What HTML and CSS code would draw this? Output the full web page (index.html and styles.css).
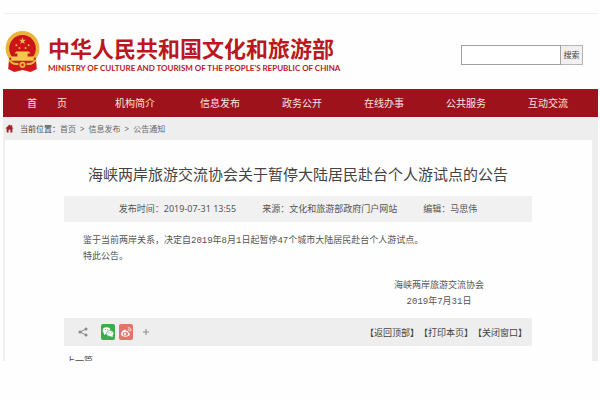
FILE: index.html
```html
<!DOCTYPE html>
<html lang="zh-CN">
<head>
    <meta charset="UTF-8">
    <title>海峡两岸旅游交流协会关于暂停大陆居民赴台个人游试点的公告</title>
    <link rel="stylesheet" href="styles.css">
</head>
<body>
<div class="page">

    <header class="header">
        <svg class="emblem" viewBox="0 0 34 41">
            <ellipse cx="17" cy="17" rx="16.5" ry="17" fill="#e9b43c"/>
            <path d="M4 26l-1 11 6 3 8-2 8 2 6-3-1-11z" fill="#cf1a1e"/>
            <path d="M4 28q3 5 9 4M30 28q-3 5-9 4" fill="none" stroke="#edb941" stroke-width="2"/>
            <circle cx="17" cy="17" r="13" fill="#cd1319"/>
            <path d="M17 6l.9 2.500h2.600l-2.100 1.600.8 2.600-2.200-1.500-2.200 1.500.8-2.600-2.100-1.600h2.600z" fill="#f2b84b"/>
            <g fill="#f2b84b">
                <circle cx="11" cy="14" r="1"/>
                <circle cx="23" cy="14" r="1"/>
                <circle cx="14" cy="16.500" r="1"/>
                <circle cx="20" cy="16.500" r="1"/>
            </g>
            <path d="M11 20h12l2 2h-3v3h6v4H6v-4h6v-3H9z" fill="#f2c84b"/>
            <circle cx="17" cy="33" r="3" fill="#edb941"/>
            <circle cx="17" cy="33" r="1.200" fill="#cf1a1e"/>
        </svg>
        <div class="brand">
            <div class="brand-cn">中华人民共和国文化和旅游部</div>
            <div class="brand-en">MINISTRY OF CULTURE AND TOURISM OF THE PEOPLE'S REPUBLIC OF CHINA</div>
        </div>
        <form class="search">
            <input type="text" class="search-input" aria-label="搜索">
            <button type="submit" class="search-btn">搜索</button>
        </form>
    </header>

    <nav class="nav">
        <a href="#" class="wide">首&emsp;&emsp;页</a>
        <a href="#" class="wide">机构简介</a>
        <a href="#">信息发布</a>
        <a href="#">政务公开</a>
        <a href="#">在线办事</a>
        <a href="#">公共服务</a>
        <a href="#">互动交流</a>
    </nav>

    <div class="crumbs">
        <svg class="home" viewBox="0 0 10 10">
            <path d="M5 .500L.500 5h1.300v4.500h2.200V6.500h2v3h2.200V5h1.300L8 3.500V1H7v1.500z" fill="#a3222b"/>
        </svg>
        <span class="crumbs-label">当前位置：</span>
        <a href="#">首页</a>
        <span class="sep">&gt;</span>
        <a href="#">信息发布</a>
        <span class="sep">&gt;</span>
        <a href="#">公告通知</a>
    </div>

    <main class="main">
        <h1>海峡两岸旅游交流协会关于暂停大陆居民赴台个人游试点的公告</h1>
        <div class="meta">
            <span>发布时间：2019-07-31 13:55</span>
            <span>来源：文化和旅游部政府门户网站</span>
            <span>编辑：马思伟</span>
        </div>

        <div class="content">
            <p>鉴于当前两岸关系，决定自2019年8月1日起暂停47个城市大陆居民赴台个人游试点。</p>
            <p>特此公告。</p>
            <div class="sign">
                <p>海峡两岸旅游交流协会</p>
                <p>2019年7月31日</p>
            </div>
        </div>

        <div class="tools">
            <svg class="share" viewBox="0 0 10 10">
                <path d="M8 2L2 5l6 3" fill="none" stroke="#8a8a8a"/>
                <circle cx="8" cy="2" r="1.500" fill="#8a8a8a"/>
                <circle cx="2" cy="5" r="1.600" fill="#8a8a8a"/>
                <circle cx="8" cy="8" r="1.500" fill="#8a8a8a"/>
            </svg>
            <a href="#" class="icon wechat" aria-label="微信">
                <svg viewBox="0 0 14 16">
                    <ellipse cx="5.500" cy="6.500" rx="3.800" ry="3.300" fill="#fff"/>
                    <path d="M3 8.500v2.500l2.500-1.500z" fill="#fff"/>
                    <ellipse cx="9" cy="9.500" rx="3.600" ry="3" fill="#fff" stroke="#3aad4c" stroke-width=".6"/>
                    <path d="M9.500 12l2.200 1.300-.2-2.300z" fill="#fff"/>
                    <g fill="#3aad4c">
                        <circle cx="4.300" cy="5.600" r=".5"/>
                        <circle cx="6.800" cy="5.600" r=".5"/>
                        <circle cx="8" cy="8.800" r=".5"/>
                        <circle cx="10.200" cy="8.800" r=".5"/>
                    </g>
                </svg>
            </a>
            <a href="#" class="icon weibo" aria-label="微博">
                <svg viewBox="0 0 14 16">
                    <path d="M6 5.500c-2 .5-4 2.800-4 4.500 0 3.500 8.800 3.500 8.800 0 0-1-.8-1.600-1.600-1.700.3-1.500-.9-1.800-2.600-1.200.3-1-.1-1.700-.6-1.600z" fill="#fff"/>
                    <ellipse cx="6.400" cy="9.900" rx="2.700" ry="1.900" fill="#e4746a"/>
                    <circle cx="6" cy="10" r="1.100" fill="#fff"/>
                    <path d="M8.800 3.800c2-.4 3.600 1.200 3 3.400M9 5.500c.9-.1 1.500.6 1.200 1.500" fill="none" stroke="#fff" stroke-width=".9"/>
                </svg>
            </a>
            <a href="#" class="more" aria-label="更多">
                <svg viewBox="0 0 6 6"><path d="M3 0v6M0 3h6" stroke="#8a8a8a" fill="none"/></svg>
            </a>
            <div class="links">
                <a href="#">【返回顶部】</a><a href="#">【打印本页】</a><a href="#">【关闭窗口】</a>
            </div>
        </div>
        <div class="prev">上一篇</div>
    </main>

</div>
</body>
</html>
```

FILE: styles.css
```css
* {
    box-sizing: border-box;
}

body {
    margin: 0;
    background: #fefefe;
    color: #555;
    font-family: "Noto Sans", "Noto Sans CJK SC", sans-serif;
    font-size: 9px;
}

a {
    color: inherit;
    text-decoration: none;
}

h1, p {
    margin: 0;
}

.page {
    margin: 13px 2px 0 3px;
    border-top: 1px solid #f0f0f0;
}

.header {
    display: flex;
    align-items: center;
    height: 75px;
    padding: 0 15px 0 2px;
}

.emblem {
    width: 35px;
    height: 42px;
    margin-right: 8px;
}

.brand {
    color: #bb1722;
    white-space: nowrap;
}

.brand-cn {
    font-family: "Noto Sans CJK SC", sans-serif;
    font-size: 22px;
    line-height: 32px;
    font-weight: bold;
}

.brand-en {
    font-family: Lato, sans-serif;
    font-size: 8px;
    line-height: 10px;
    font-weight: bold;
}

.search {
    display: flex;
    margin-left: auto;
    height: 20px;
    margin-top: 6px;
}

.search-input {
    width: 100px;
    padding: 0 4px;
    border: 1px solid #a0a0a0;
    background: #fff;
}

.search-btn {
    width: 22px;
    padding: 0;
    border: 1px solid #b5b5b5;
    border-left: 0;
    background: #f0f0f0;
    color: #444;
    font-family: "Noto Sans CJK SC", sans-serif;
    font-size: 8px;
}

.nav {
    display: flex;
    height: 28px;
    padding: 0 9px 0 0;
    background: #9e121c;
    color: #f8e4e4;
    font-size: 10px;
    line-height: 28px;
    text-align: center;
}

.nav a {
    flex: 82;
}

.nav .wide {
    flex-grow: 88;
}

.crumbs {
    display: flex;
    align-items: center;
    height: 23px;
    padding-left: 2px;
    background: #eee;
    color: #666;
    font-size: 8px;
}

.home {
    width: 9px;
    height: 9px;
    margin-right: 6px;
}

.crumbs-label {
    color: #444;
}

.sep {
    margin: 0 4px;
}

.main {
    border-left: 2px solid #eee;
    border-right: 6px solid #eee;
    padding: 19px 60px 0 59px;
    background: #fefefe;
}

h1 {
    font-size: 15px;
    line-height: 30px;
    font-weight: normal;
    color: #444;
    text-align: center;
    white-space: nowrap;
}

.meta {
    display: flex;
    justify-content: center;
    gap: 26px;
    margin-top: 7px;
    background: #f1f1f1;
    line-height: 26px;
    white-space: nowrap;
}

.content {
    padding: 11px 46px 8px 19px;
    font-family: "Liberation Mono", "Noto Sans CJK SC", sans-serif;
    line-height: 16px;
}

.sign {
    width: 94px;
    margin: 13px 0 0 auto;
    text-align: center;
}

.tools {
    display: flex;
    align-items: center;
    height: 28px;
    padding: 0 5px 0 14px;
    background: #eee;
}

.share {
    width: 10px;
    height: 10px;
    margin-right: 13px;
}

.icon {
    width: 14px;
    height: 16px;
    margin-right: 4px;
    border-radius: 2px;
}

.icon svg, .more svg {
    display: block;
    width: 100%;
}

.wechat {
    background: #3aad4c;
}

.weibo {
    background: #e4746a;
}

.more {
    width: 6px;
    margin-left: 6px;
}

.links {
    margin-left: auto;
    color: #444;
    font-family: "Noto Sans CJK SC", sans-serif;
    text-spacing-trim: space-all;
    white-space: nowrap;
}

/* only the top of the next row is visible */
.prev {
    height: 15px;
    padding: 8px 2px 0;
    overflow: hidden;
    line-height: 14px;
    color: #444;
}
```
